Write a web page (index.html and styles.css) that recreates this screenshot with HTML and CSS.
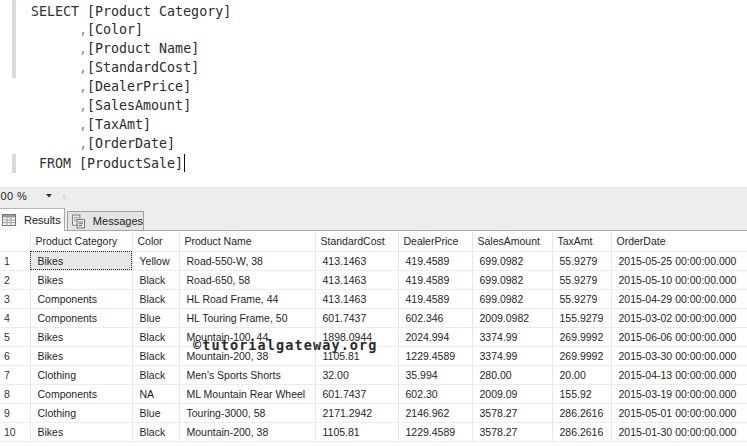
FILE: index.html
```html
<!DOCTYPE html>
<html>
<head>
<meta charset="utf-8">
<link rel="stylesheet" href="styles.css">
</head>
<body>
<div class="editor">
  <div class="line first marked"><span class="mark"></span><span class="code"><span class="kw">SELECT</span> [Product Category]</span></div>
  <div class="line marked"><span class="mark"></span><span class="code">      <span class="comma">,</span>[Color]</span></div>
  <div class="line marked"><span class="mark"></span><span class="code">      <span class="comma">,</span>[Product Name]</span></div>
  <div class="line marked"><span class="mark"></span><span class="code">      <span class="comma">,</span>[StandardCost]</span></div>
  <div class="line"><span class="mark"></span><span class="code">      <span class="comma">,</span>[DealerPrice]</span></div>
  <div class="line"><span class="mark"></span><span class="code">      <span class="comma">,</span>[SalesAmount]</span></div>
  <div class="line"><span class="mark"></span><span class="code">      <span class="comma">,</span>[TaxAmt]</span></div>
  <div class="line"><span class="mark"></span><span class="code">      <span class="comma">,</span>[OrderDate]</span></div>
  <div class="line marked"><span class="mark"></span><span class="code"> <span class="kw">FROM</span> [ProductSale]<span class="caret"></span></span></div>
</div>

<div class="zoombar">
  <span class="zoomval">100 %</span>
  <svg class="ddarrow" width="6" height="4" viewBox="0 0 6 4"><path d="M0 0H6L3 3.5Z" fill="#333"/></svg>
  <span class="scrollhint">‹</span>
</div>

<div class="tabstrip">
  <div class="tab active">
    <svg class="ticon" width="14" height="12" viewBox="0 0 14 12">
      <rect x="0.5" y="0.5" width="13" height="11" fill="#fff" stroke="#777"/>
      <rect x="1" y="1" width="12" height="2.5" fill="#9a9a9a"/>
      <path d="M1 6H13M1 8.7H13M5 3.5V11.5M9 3.5V11.5" stroke="#999" stroke-width="1"/>
    </svg>
    <span>Results</span>
  </div>
  <div class="tab">
    <svg class="ticon" width="15" height="15" viewBox="0 0 15 15">
      <rect x="0.5" y="0.5" width="8" height="11" fill="#f4f4f4" stroke="#777"/>
      <path d="M2 3H7M2 5H7M2 7H6" stroke="#999"/>
      <rect x="5.5" y="5.5" width="8" height="9" fill="#fff" stroke="#666"/>
      <path d="M7 8H12M7 10H12M7 12H11" stroke="#555"/>
    </svg>
    <span>Messages</span>
  </div>
</div>

<div class="grid">
  <table class="results">
    <colgroup>
      <col class="c-num"><col class="c-cat"><col class="c-color"><col class="c-name"><col class="c-cost"><col class="c-dealer"><col class="c-sales"><col class="c-tax"><col class="c-date">
    </colgroup>
    <thead>
      <tr><th></th><th>Product Category</th><th>Color</th><th>Product Name</th><th>StandardCost</th><th>DealerPrice</th><th>SalesAmount</th><th>TaxAmt</th><th>OrderDate</th></tr>
    </thead>
    <tbody>
      <tr><td class="num">1</td><td class="sel">Bikes</td><td>Yellow</td><td>Road-550-W, 38</td><td>413.1463</td><td>419.4589</td><td>699.0982</td><td>55.9279</td><td>2015-05-25 00:00:00.000</td></tr>
      <tr><td class="num">2</td><td>Bikes</td><td>Black</td><td>Road-650, 58</td><td>413.1463</td><td>419.4589</td><td>699.0982</td><td>55.9279</td><td>2015-05-10 00:00:00.000</td></tr>
      <tr><td class="num">3</td><td>Components</td><td>Black</td><td>HL Road Frame, 44</td><td>413.1463</td><td>419.4589</td><td>699.0982</td><td>55.9279</td><td>2015-04-29 00:00:00.000</td></tr>
      <tr><td class="num">4</td><td>Components</td><td>Blue</td><td>HL Touring Frame, 50</td><td>601.7437</td><td>602.346</td><td>2009.0982</td><td>155.9279</td><td>2015-03-02 00:00:00.000</td></tr>
      <tr><td class="num">5</td><td>Bikes</td><td>Black</td><td>Mountain-100, 44</td><td>1898.0944</td><td>2024.994</td><td>3374.99</td><td>269.9992</td><td>2015-06-06 00:00:00.000</td></tr>
      <tr><td class="num">6</td><td>Bikes</td><td>Black</td><td>Mountain-200, 38</td><td>1105.81</td><td>1229.4589</td><td>3374.99</td><td>269.9992</td><td>2015-03-30 00:00:00.000</td></tr>
      <tr><td class="num">7</td><td>Clothing</td><td>Black</td><td>Men's Sports Shorts</td><td>32.00</td><td>35.994</td><td>280.00</td><td>20.00</td><td>2015-04-13 00:00:00.000</td></tr>
      <tr><td class="num">8</td><td>Components</td><td>NA</td><td>ML Mountain Rear Wheel</td><td>601.7437</td><td>602.30</td><td>2009.09</td><td>155.92</td><td>2015-03-19 00:00:00.000</td></tr>
      <tr><td class="num">9</td><td>Clothing</td><td>Blue</td><td>Touring-3000, 58</td><td>2171.2942</td><td>2146.962</td><td>3578.27</td><td>286.2616</td><td>2015-05-01 00:00:00.000</td></tr>
      <tr><td class="num">10</td><td>Bikes</td><td>Black</td><td>Mountain-200, 38</td><td>1105.81</td><td>1229.4589</td><td>3578.27</td><td>286.2616</td><td>2015-01-30 00:00:00.000</td></tr>
    </tbody>
  </table>
  <div class="watermark">©tutorialgateway.org</div>
</div>
</body>
</html>
```

FILE: styles.css
```css
html, body {
  margin: 0;
  padding: 0;
  background: #ffffff;
  width: 747px;
  height: 447px;
  overflow: hidden;
}

.editor {
  height: 187px;
  background: #ffffff;
  font-family: "DejaVu Sans Mono", "Liberation Mono", monospace;
  font-size: 13.3px;
  color: #2b2b2b;
}

.line {
  display: flex;
  height: 18.9px;
  line-height: 18.9px;
}

.line.first {
  height: 21.4px;
}

.line.first .code {
  padding-top: 2.5px;
}

.mark {
  width: 4px;
  margin-left: 12px;
  margin-right: 15px;
  flex: none;
}

.line.marked .mark {
  background: #d9d9d9;
}

.code {
  white-space: pre;
  display: block;
}

.kw {
  color: #333333;
}

.comma {
  color: #8a8a8a;
}

.caret {
  display: inline-block;
  width: 1px;
  height: 18px;
  background: #111;
  margin-left: 1px;
  vertical-align: -4px;
}

.zoombar {
  height: 18px;
  background: #ededed;
  display: flex;
  align-items: center;
  font-family: "Liberation Sans", Arial, sans-serif;
  font-size: 11px;
  color: #222;
}

.zoomval {
  margin-left: -6px;
  letter-spacing: 0.4px;
}

.ddarrow {
  margin-left: 19px;
}

.scrollhint {
  margin-left: 10px;
  color: #c8c8c8;
  font-size: 11px;
}

.tabstrip {
  height: 26px;
  box-sizing: border-box;
  background: #ededed;
  border-bottom: 1px solid #a8a8a8;
  display: flex;
  align-items: flex-end;
  font-family: "Liberation Sans", Arial, sans-serif;
  font-size: 11px;
  color: #222;
}

.tab {
  display: flex;
  align-items: center;
  box-sizing: border-box;
}

.tab.active {
  width: 65px;
  height: 23px;
  background: #fafafa;
  border-top: 1px solid #b8b8b8;
  border-right: 1px solid #a8a8a8;
  padding-left: 2px;
  margin-bottom: -1px;
  padding-bottom: 1px;
}

.tab.active .ticon {
  margin-right: 8px;
}

.tab:not(.active) {
  width: 77px;
  height: 19px;
  margin-left: 2px;
  background: #e4e4e4;
  border: 1px solid #a0a0a0;
  border-bottom: none;
  padding-left: 4px;
}

.tab:not(.active) .ticon {
  margin-right: 7px;
  margin-top: 1px;
}

.grid {
  position: relative;
  padding-top: 1px;
  font-family: "Liberation Sans", Arial, sans-serif;
  font-size: 10.5px;
  color: #1e1e1e;
}

.results {
  width: 747px;
  table-layout: fixed;
  border-collapse: collapse;
}

.c-num { width: 30px; }
.c-cat { width: 102px; }
.c-color { width: 47px; }
.c-name { width: 136px; }
.c-cost { width: 83px; }
.c-dealer { width: 74px; }
.c-sales { width: 80px; }
.c-tax { width: 59px; }
.c-date { width: 136px; }

.results th,
.results td {
  height: 19.1px;
  padding: 0 0 0 7px;
  text-align: left;
  font-weight: normal;
  white-space: nowrap;
  overflow: hidden;
  border-right: 1px solid #e6e6e6;
  border-bottom: 1px solid #ececec;
  box-sizing: border-box;
  line-height: 18px;
}

.results th {
  height: 19px;
  padding-left: 5px;
}

.results td.num {
  padding-left: 4px;
  color: #333;
}

.results td.sel {
  background: #e8e8e8;
  outline: 1px dotted #222;
  outline-offset: -1px;
}

.watermark {
  position: absolute;
  left: 193px;
  top: 106px;
  font-family: "DejaVu Sans Mono", monospace;
  font-weight: bold;
  font-size: 13.5px;
  letter-spacing: 1.1px;
  color: #2a2a2a;
}
```
